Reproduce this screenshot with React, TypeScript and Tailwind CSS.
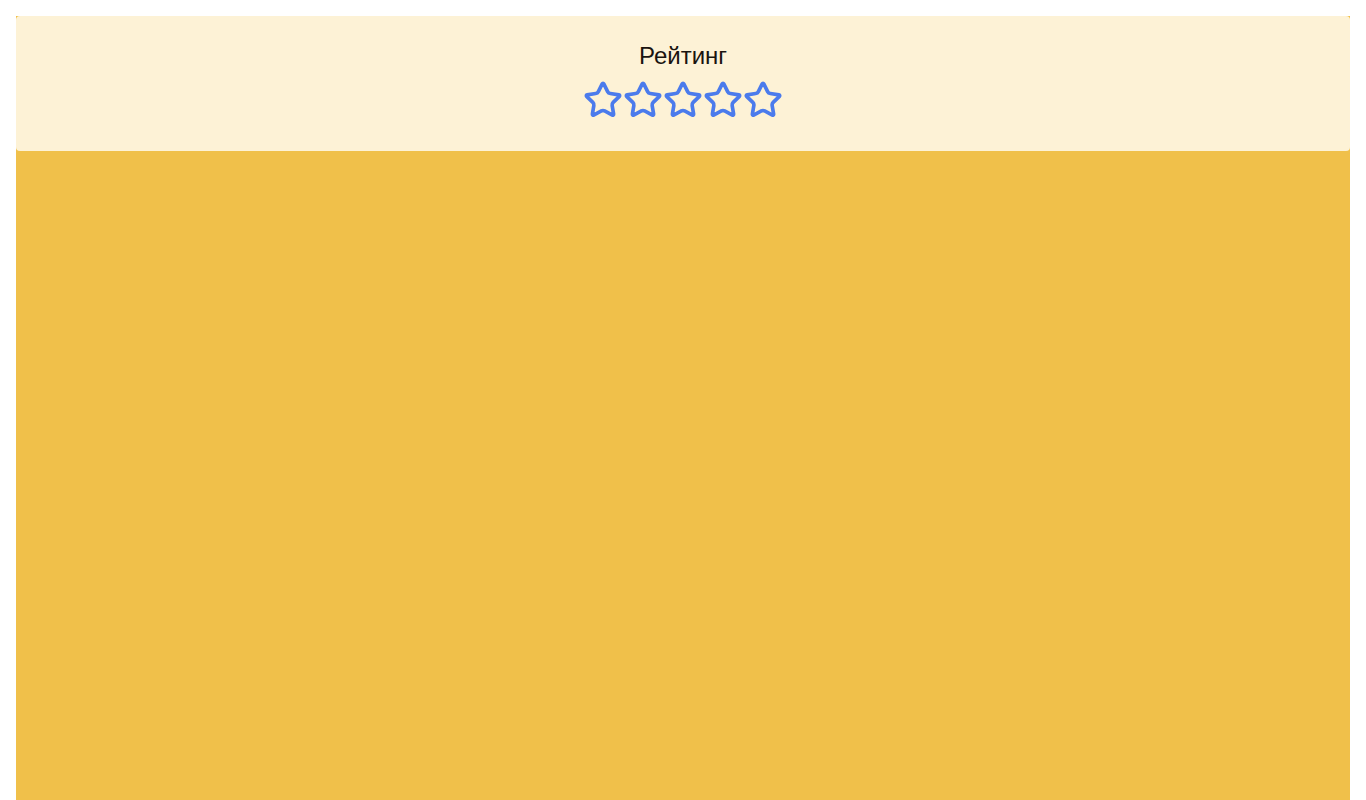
import { Star } from "lucide-react";

export default function App() {
  return (
    <div className="bg-white p-4 pb-0 min-h-screen" style={{ fontFamily: '"Liberation Sans", Arial, sans-serif' }}>
      <div className="bg-[#f0c04a] min-h-[784px]">
        <div className="bg-[#fdf2d6] rounded-[4px] h-[135px] flex flex-col items-center pt-[22px]">
          <h2 className="text-[24px] leading-[36px] text-[#1a1410]">Рейтинг</h2>
          <div className="flex mt-[6px]">
            {[0, 1, 2, 3, 4].map((i) => (
              <Star key={i} size={40} strokeWidth={2.2} className="text-[#4b7bec]" />
            ))}
          </div>
        </div>
      </div>
    </div>
  );
}
